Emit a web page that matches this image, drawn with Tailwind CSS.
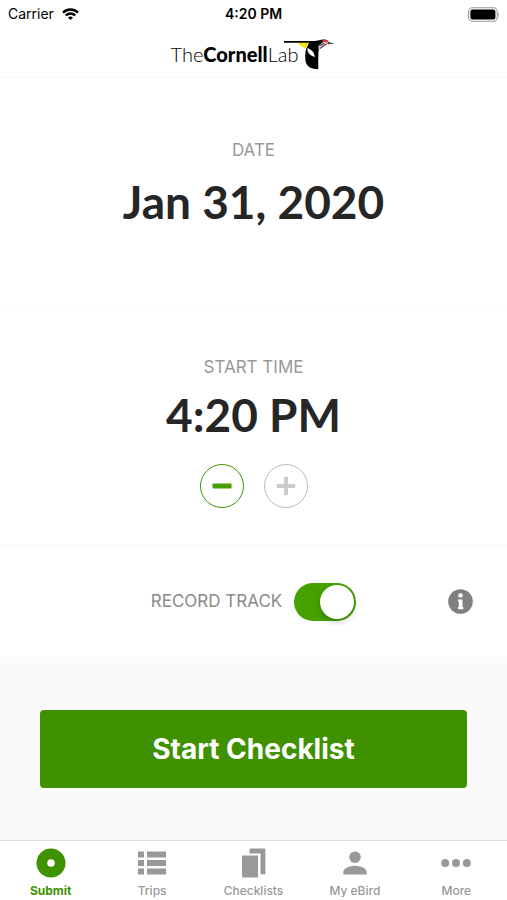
<!DOCTYPE html>
<html lang="en">

<head>
    <meta charset="UTF-8">
    <meta name="viewport" content="width=device-width, initial-scale=1.0">
    <title>eBird - Start Checklist</title>
    <script src="https://cdn.jsdelivr.net/npm/@tailwindcss/browser@4"></script>
</head>

<body class="min-h-screen flex flex-col bg-white font-['Inter',sans-serif] text-[#262626]">
    <!-- status bar -->
    <div class="grid grid-cols-3 items-center h-7 px-2 text-sm text-black">
        <div class="flex items-center gap-2">
            <span>Carrier</span>
            <svg class="w-[17px] h-3" viewBox="0 0 17 12" fill="none" stroke="#000" stroke-width="2.4">
                <path d="M1 4.6a10.6 10.6 0 0 1 15 0" />
                <path d="M3.8 7.5a6.7 6.7 0 0 1 9.4 0" />
                <path d="M8.5 12 6 9.6a3.6 3.6 0 0 1 5 0z" fill="#000" stroke="none" />
            </svg>
        </div>
        <span class="text-center font-semibold">4:20 PM</span>
        <svg class="justify-self-end w-8 h-[15px]" viewBox="0 0 32 15">
            <rect x="1.600" y="0.8" width="28.6" height="13.4" rx="3.8" fill="#fff" stroke="#999" stroke-width="1.1" />
            <rect x="3.400" y="2.6" width="25" height="9.8" rx="2" fill="#000" />
            <path d="M31 5.200c1 .6 1 4 0 4.600z" fill="#999" />
        </svg>
    </div>

    <header class="flex justify-center h-[50px] pt-2 border-b border-[#f7f7f7]">
        <div class="flex h-9 text-black">
            <span class="pt-1 font-['Lato',sans-serif] text-xl leading-7 font-light">The<b class="font-black">Cornell</b>Lab</span>
            <svg class="w-[52px] h-9 -ml-3.5" viewBox="0 0 52 36">
                <path d="M13.500 6.500h11l-3 6c-3.500-1.500-5.500-3.500-8-6z" fill="#f5e400" />
                <path d="M0 5h25c3-.1 6.500.2 10-.8 3-.9 7-1.200 9 1.200l-4.500 4.600c-2.300 1.400-4 2.400-4.800 4.400-.4 3-.4 11-.4 18.800-8.800-.2-12.600-3.400-13-10.200-.3-5.200.2-10.400 2.400-13.600L25 6.800H0z" fill="#000" />
                <path d="M23.300 12.200c3.400.6 7 3.500 7.500 8.800-4-1.600-7.800-3.700-7.500-8.800z" fill="#fff" />
                <path d="M38 4.400c2.600-1.600 6.300-.9 6.700 1.900l-5 .2z" fill="#e3262e" />
                <path d="M34.500 9.800l4.800-4 5.200.4-3.200 3.200-6.800 4.500z" fill="#ccc" />
                <path d="M35.500 9.700l5-2.400M36 12.500l5.800-4.200" fill="none" stroke="#222" stroke-width="1" />
                <path d="M39.500 10.300l4-2.800" fill="none" stroke="#e3262e" stroke-width="1" />
                <path d="M44 5.800l6.500 2-7 .4z" fill="#444" />
            </svg>
        </div>
    </header>

    <main class="grow flex flex-col">
        <section class="flex flex-col items-center h-[230px] pt-[60px] border-b border-[#f9f9f9]">
            <h2 id="date-label" class="text-[17px] leading-6 text-[#999]">DATE</h2>
            <button type="button" id="date" aria-labelledby="date-label date" class="mt-2.5 font-['Lato',sans-serif] text-[46px] leading-[60px] font-bold">Jan 31, 2020</button>
        </section>

        <section class="flex flex-col items-center h-[238px] pt-[47px] border-b border-[#f9f9f9]">
            <h2 id="time-label" class="text-[17px] leading-6 text-[#999]">START TIME</h2>
            <button type="button" id="time" aria-labelledby="time-label time" class="mt-1.5 font-['Lato',sans-serif] text-[46px] leading-[60px] font-bold">4:20 PM</button>
            <div class="flex gap-5 mt-[19px]">
                <button type="button" aria-label="Earlier" class="flex items-center justify-center size-11 rounded-full border border-[#3f9300] text-[#46a000]">
                    <svg class="size-5" viewBox="0 0 20 20" fill="currentColor"><rect x="0.500" y="7.500" width="19" height="5" rx="0.8" /></svg>
                </button>
                <button type="button" aria-label="Later" class="flex items-center justify-center size-11 rounded-full border border-[#bbb] text-[#ccc]">
                    <svg class="size-5" viewBox="0 0 20 20" fill="currentColor"><path d="M8 .8h4V8h7.200v4H12v7.200H8V12H.8V8H8z" /></svg>
                </button>
            </div>
        </section>

        <section class="grid grid-cols-[1fr_auto_1fr] items-center h-[111px] px-[34px]">
            <label for="track" class="col-start-2 flex items-center gap-3 text-[17px] text-[#8a8a8a]">
                RECORD TRACK
                <input type="checkbox" role="switch" id="track" checked
                    class="appearance-none flex items-center w-[62px] h-[38px] p-[2px] rounded-full bg-[#ccc] checked:bg-[#46a000] checked:justify-end before:content-[''] before:size-[34px] before:rounded-full before:bg-white before:shadow-[0_3px_6px_rgba(0,0,0,0.2)]">
            </label>
            <button type="button" aria-label="About tracks" class="justify-self-end size-[25px] rounded-full">
                <svg class="size-full" viewBox="0 0 25 25">
                    <circle cx="12.500" cy="12.500" r="12.300" fill="#808080" />
                    <circle cx="12.500" cy="6.500" r="2.200" fill="#fff" />
                    <path d="M10 10.400h4.500v7.600h.8v2.200H10V18h.8v-5.400H10z" fill="#fff" />
                </svg>
            </button>
        </section>

        <section class="grow px-10 pt-[53px] bg-[#fafafa]">
            <button type="button" class="w-full h-[78px] rounded bg-[#3f9100] text-[28px] font-bold text-white">Start Checklist</button>
        </section>
    </main>

    <nav class="grid grid-cols-5 h-[60px] pt-[7px] border-t border-[#dcdcdc] bg-white text-xs font-medium text-[#999]">
        <a href="#submit" aria-current="page" class="flex flex-col items-center gap-[5px] font-bold text-[#3f9300]">
            <svg class="size-[30px]" viewBox="0 0 30 30">
                <circle cx="15" cy="15" r="14.500" fill="currentColor" />
                <circle cx="15" cy="15" r="3.800" fill="#fff" />
            </svg>
            Submit
        </a>
        <a href="#trips" class="flex flex-col items-center gap-[5px]">
            <svg class="size-[30px]" viewBox="0 0 30 30" fill="currentColor">
                <path d="M1 3.500h6v6H1zM10 3.500h19v6H10zM1 12h6v6H1zM10 12h19v6H10zM1 20.500h6v6H1zM10 20.500h19v6H10z" />
            </svg>
            Trips
        </a>
        <a href="#checklists" class="flex flex-col items-center gap-[5px]">
            <svg class="size-[30px]" viewBox="0 0 30 30" fill="currentColor">
                <path d="M4 7.500h16v22H5.200A1.200 1.200 0 0 1 4 28.300z" />
                <path d="M11.500 1.800A1.200 1.200 0 0 1 12.700.6h13.500a1.200 1.200 0 0 1 1.200 1.200v24.500h-4.900V5.500h-11z" />
            </svg>
            Checklists
        </a>
        <a href="#my-ebird" class="flex flex-col items-center gap-[5px]">
            <svg class="size-[30px]" viewBox="0 0 30 30" fill="currentColor">
                <circle cx="15" cy="9.200" r="5.800" />
                <path d="M3.300 26.500v-2.700c0-4 7.800-6 11.700-6s11.700 2 11.700 6v2.700z" />
            </svg>
            My eBird
        </a>
        <a href="#more" class="flex flex-col items-center gap-[5px]">
            <svg class="size-[30px]" viewBox="0 0 30 30" fill="currentColor">
                <circle cx="4.200" cy="15" r="4" />
                <circle cx="15" cy="15" r="4" />
                <circle cx="25.800" cy="15" r="4" />
            </svg>
            More
        </a>
    </nav>
</body>

</html>
